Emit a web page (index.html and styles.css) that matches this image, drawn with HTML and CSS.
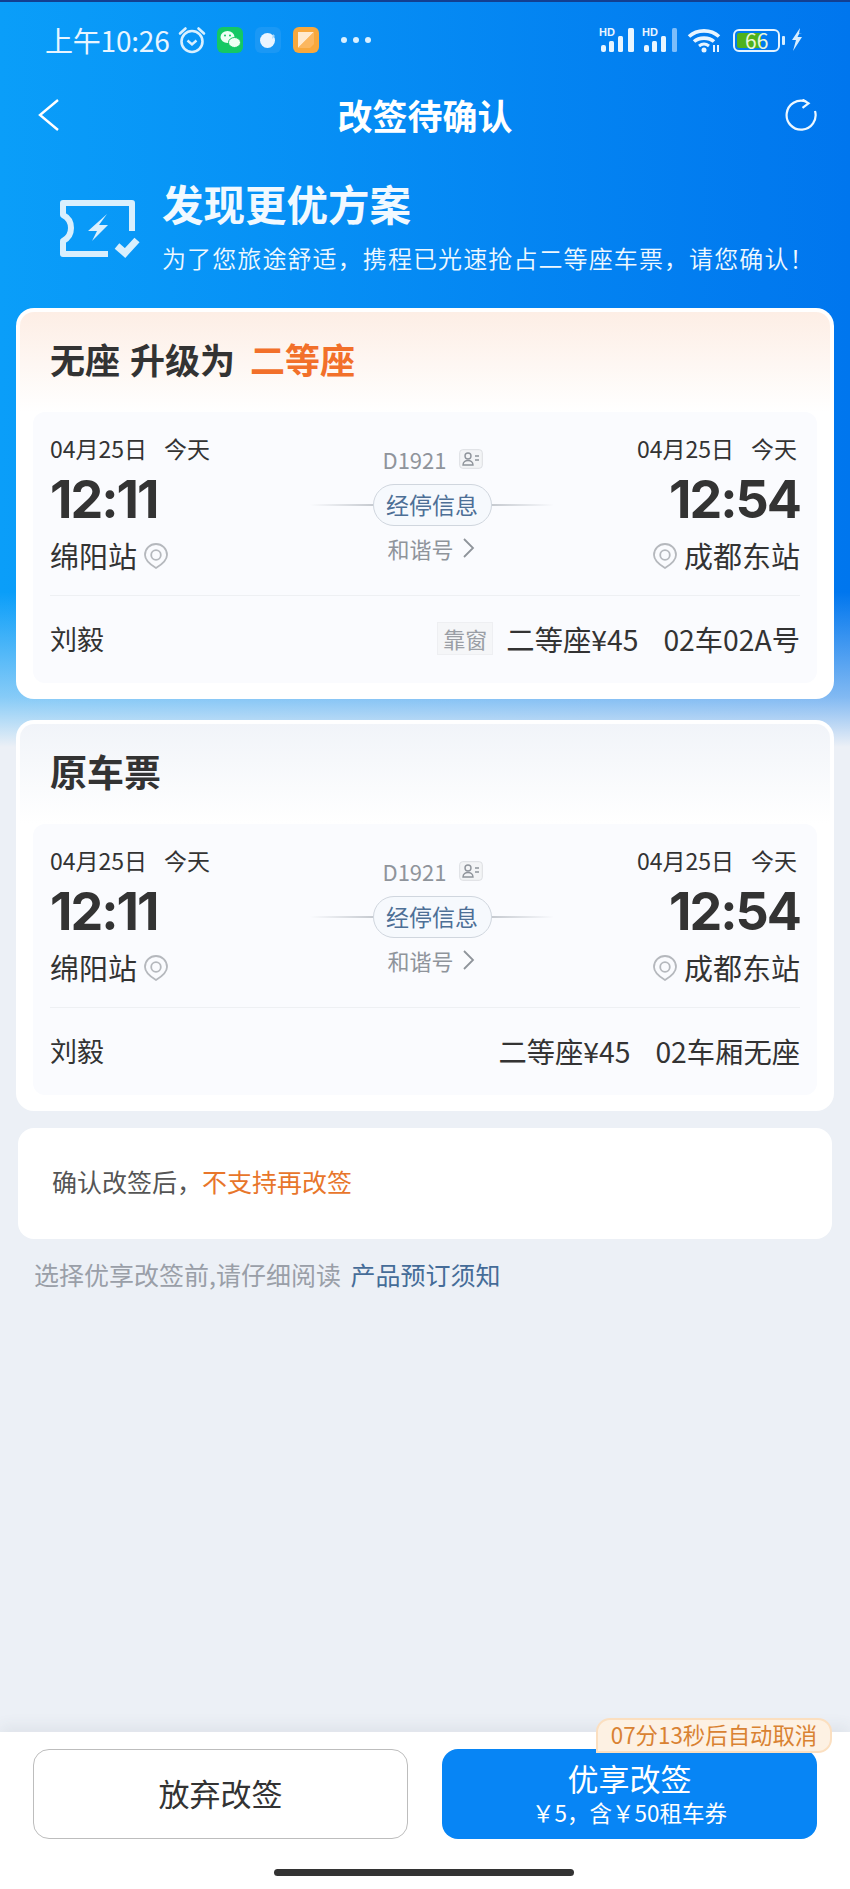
FILE: index.html
```html
<!DOCTYPE html>
<html lang="zh-CN">
<head>
<meta charset="utf-8">
<title>改签待确认</title>
<link rel="stylesheet" href="styles.css">
</head>
<body>
<div class="page">
  <main class="main">
    <div class="status">
      <div class="status-left">
        <span class="clock">上午10:26</span>
        <svg class="ic-alarm" viewBox="0 0 30 30"><circle cx="15" cy="16.500" r="10.500" fill="none" stroke="#d9f0ff" stroke-width="2.600"/><path d="M10.500 15.500l4.500 4 4.500-4" fill="none" stroke="#d9f0ff" stroke-width="2.400"/><path d="M3 8.500L8.500 3.500M27 8.500L21.500 3.500" stroke="#d9f0ff" stroke-width="2.600" stroke-linecap="round"/></svg>
        <svg class="ic-app ic-wx" viewBox="0 0 26 26"><rect width="26" height="26" rx="6" fill="#14c864"/><ellipse cx="10.500" cy="10" rx="7" ry="6" fill="#eefff4"/><ellipse cx="17.500" cy="15.500" rx="6" ry="5" fill="#eefff4" stroke="#14c864"/><circle cx="8" cy="8.500" r="1" fill="#14c864"/><circle cx="13" cy="8.500" r="1" fill="#14c864"/></svg>
        <svg class="ic-app" viewBox="0 0 26 26"><rect width="26" height="26" rx="6" fill="#1a98f5"/><circle cx="12.500" cy="13.500" r="7.500" fill="#eaf5ff"/><path d="M18 7l2 2-3 3z" fill="#9fd4fb"/></svg>
        <svg class="ic-app" viewBox="0 0 26 26"><rect width="26" height="26" rx="6" fill="#f8a83c"/><path d="M5 5h16L5 21z" fill="#ffeacf"/><path d="M21 5v12l-4 4H5z" fill="#fbb75f"/></svg>
        <span class="dots"><i></i><i></i><i></i></span>
      </div>
      <div class="status-right">
        <div class="sig"><span class="hd">HD</span><svg class="ic-sig" viewBox="0 0 36 24"><rect x="2" y="17" width="5" height="7" rx="2" fill="#e8f5ff"/><rect x="10" y="13" width="5" height="11" rx="1.500" fill="#e8f5ff"/><rect x="19" y="8" width="5" height="16" rx="1.500" fill="#e8f5ff"/><rect x="29" y="0" width="6" height="24" rx="1.500" fill="#e8f5ff"/></svg></div>
        <div class="sig"><span class="hd">HD</span><svg class="ic-sig" viewBox="0 0 36 24"><rect x="2" y="17" width="5" height="7" rx="2" fill="#e8f5ff"/><rect x="10" y="13" width="5" height="11" rx="1.500" fill="#e8f5ff"/><rect x="19" y="8" width="5" height="16" rx="1.500" fill="#e8f5ff"/><rect x="30" y="0" width="5" height="24" rx="1.500" fill="#7dbdfa"/></svg></div>
        <svg class="ic-wifi" viewBox="0 0 34 26"><path d="M2 9.500C10 2 24 2 32 9.500" fill="none" stroke="#e8f5ff" stroke-width="3.600"/><path d="M7 14.500C12 10 22 10 27 14.500" fill="none" stroke="#e8f5ff" stroke-width="3.600"/><path d="M12 19c3-2.400 7-2.400 10 0" fill="none" stroke="#e8f5ff" stroke-width="3"/><circle cx="17" cy="23" r="2.500" fill="#e8f5ff"/><path d="M27 18v7M31 18v7" stroke="#e8f5ff" stroke-width="2"/></svg>
        <div class="battery"><span class="battery-fill"></span><span class="battery-num">66</span></div>
        <span class="battery-cap"></span>
        <svg class="ic-bolt" viewBox="0 0 12 24"><path d="M9 0L1 12h4l-3 11 9-14H6.500l1.500-3 3-1-3 .5z" fill="#d6edff"/></svg>
      </div>
    </div>

    <header class="nav">
      <svg class="ic-back" viewBox="0 0 24 36"><path d="M22 3L4 18l18 15" fill="none" stroke="#fff" stroke-width="2.400"/></svg>
      <h1 class="nav-title">改签待确认</h1>
      <svg class="ic-refresh" viewBox="0 0 32 32"><path d="M21 2.500A14.500 14.500 0 1 0 30 12" fill="none" stroke="#eef8ff" stroke-width="2.200"/><path d="M17.500 .5l6 3.800-6 4.500" fill="none" stroke="#eef8ff" stroke-width="2.200"/></svg>
    </header>

    <section class="hero">
      <svg class="ic-ticket" viewBox="0 0 80 58"><path d="M72 31V3H3V15Q11 19 11 28T3 41V54H48" fill="none" stroke="#d9effd" stroke-width="6" stroke-linejoin="round"/><path d="M47 14L28 31h9l-5 10 16-16h-9z" fill="#d9effd"/><path d="M57 46l8 7 12-13" fill="none" stroke="#d9effd" stroke-width="7"/></svg>
      <div class="hero-text">
        <h2 class="hero-title">发现更优方案</h2>
        <p class="hero-sub">为了您旅途舒适，携程已光速抢占二等座车票，请您确认！</p>
      </div>
    </section>

    <section class="card">
      <div class="card-head head-peach">
        <h3 class="card-title">无座 升级为 <em class="accent">二等座</em></h3>
      </div>
      <div class="panel">
        <div class="route">
          <div class="stop">
            <div class="date"><span>04月25日</span><span>今天</span></div>
            <div class="time">12:11</div>
            <div class="station"><span>绵阳站</span><svg class="ic-pin" viewBox="0 0 24 26"><path d="M12 1a11 11 0 0 1 11 11c0 6-6 10-11 13C7 22 1 18 1 12A11 11 0 0 1 12 1z" fill="none" stroke="#b5b8bd" stroke-width="1.800"/><circle cx="12" cy="12" r="4.800" fill="none" stroke="#b5b8bd" stroke-width="1.800"/></svg></div>
          </div>
          <div class="mid">
            <div class="train"><span>D1921</span><svg class="ic-id" viewBox="0 0 24 20"><rect x=".7" y=".7" width="22.600" height="18.600" rx="3" fill="#f3f4f6" stroke="#dcdee2"/><circle cx="9" cy="7" r="3" fill="none" stroke="#8f949b" stroke-width="1.400"/><path d="M4 16c0-6 10-6 10 0z" fill="none" stroke="#8f949b" stroke-width="1.400"/><path d="M16 7h4M16 11h4" stroke="#8f949b" stroke-width="1.400"/></svg></div>
            <div class="pill-row"><span class="line line-l"></span><span class="pill">经停信息</span><span class="line line-r"></span></div>
            <div class="model"><span>和谐号</span><svg class="ic-chev" viewBox="0 0 13 22"><path d="M2 2l9 9-9 9" fill="none" stroke="#8f949b" stroke-width="1.800"/></svg></div>
          </div>
          <div class="stop stop-r">
            <div class="date"><span>04月25日</span><span>今天</span></div>
            <div class="time">12:54</div>
            <div class="station"><svg class="ic-pin" viewBox="0 0 24 26"><path d="M12 1a11 11 0 0 1 11 11c0 6-6 10-11 13C7 22 1 18 1 12A11 11 0 0 1 12 1z" fill="none" stroke="#b5b8bd" stroke-width="1.800"/><circle cx="12" cy="12" r="4.800" fill="none" stroke="#b5b8bd" stroke-width="1.800"/></svg><span>成都东站</span></div>
          </div>
        </div>
        <div class="passenger">
          <span class="name">刘毅</span>
          <div class="seat"><span class="tag">靠窗</span><span>二等座¥45</span><span>02车02A号</span></div>
        </div>
      </div>
    </section>

    <section class="card">
      <div class="card-head head-blue">
        <h3 class="card-title card-title-lg">原车票</h3>
      </div>
      <div class="panel">
        <div class="route">
          <div class="stop">
            <div class="date"><span>04月25日</span><span>今天</span></div>
            <div class="time">12:11</div>
            <div class="station"><span>绵阳站</span><svg class="ic-pin" viewBox="0 0 24 26"><path d="M12 1a11 11 0 0 1 11 11c0 6-6 10-11 13C7 22 1 18 1 12A11 11 0 0 1 12 1z" fill="none" stroke="#b5b8bd" stroke-width="1.800"/><circle cx="12" cy="12" r="4.800" fill="none" stroke="#b5b8bd" stroke-width="1.800"/></svg></div>
          </div>
          <div class="mid">
            <div class="train"><span>D1921</span><svg class="ic-id" viewBox="0 0 24 20"><rect x=".7" y=".7" width="22.600" height="18.600" rx="3" fill="#f3f4f6" stroke="#dcdee2"/><circle cx="9" cy="7" r="3" fill="none" stroke="#8f949b" stroke-width="1.400"/><path d="M4 16c0-6 10-6 10 0z" fill="none" stroke="#8f949b" stroke-width="1.400"/><path d="M16 7h4M16 11h4" stroke="#8f949b" stroke-width="1.400"/></svg></div>
            <div class="pill-row"><span class="line line-l"></span><span class="pill">经停信息</span><span class="line line-r"></span></div>
            <div class="model"><span>和谐号</span><svg class="ic-chev" viewBox="0 0 13 22"><path d="M2 2l9 9-9 9" fill="none" stroke="#8f949b" stroke-width="1.800"/></svg></div>
          </div>
          <div class="stop stop-r">
            <div class="date"><span>04月25日</span><span>今天</span></div>
            <div class="time">12:54</div>
            <div class="station"><svg class="ic-pin" viewBox="0 0 24 26"><path d="M12 1a11 11 0 0 1 11 11c0 6-6 10-11 13C7 22 1 18 1 12A11 11 0 0 1 12 1z" fill="none" stroke="#b5b8bd" stroke-width="1.800"/><circle cx="12" cy="12" r="4.800" fill="none" stroke="#b5b8bd" stroke-width="1.800"/></svg><span>成都东站</span></div>
          </div>
        </div>
        <div class="passenger">
          <span class="name">刘毅</span>
          <div class="seat"><span>二等座¥45</span><span>02车厢无座</span></div>
        </div>
      </div>
    </section>

    <section class="notice">确认改签后，<span class="notice-hi">不支持再改签</span></section>
    <p class="tip">选择优享改签前,请仔细阅读 <span class="tip-link">产品预订须知</span></p>
  </main>

  <footer class="footer">
    <div class="actions">
      <button class="btn btn-ghost">放弃改签</button>
      <button class="btn btn-main"><span class="btn-main-t">优享改签</span><span class="btn-main-s">&#xFFE5;5，含&#xFFE5;50租车券</span></button>
    </div>
    <span class="countdown">07分13秒后自动取消</span>
    <div class="home-bar"></div>
  </footer>
</div>
</body>
</html>
```
FILE: styles.css
```css
* { box-sizing: border-box; }
html, body { margin: 0; padding: 0; }
body { width: 850px; font-family: "Noto Sans CJK SC", "Noto Sans", sans-serif; color: #333; }
h1, h2, h3, p { margin: 0; }
em { font-style: normal; }
svg { display: block; flex: none; }

.page {
  width: 850px;
  height: 1889px;
  display: flex;
  flex-direction: column;
  border-top: 2px solid #123f91;
  background:
    linear-gradient(to bottom, rgba(236,240,246,0) 590px, rgba(236,240,246,.55) 695px, #ecf0f6 745px),
    linear-gradient(to right, #0a9ef9, #0076ee);
}
.main { flex: 1; min-height: 0; }

.status { height: 76px; display: flex; justify-content: space-between; align-items: center; padding: 0 47px 0 45px; color: #e8f5ff; }
.status-left, .status-right { display: flex; align-items: center; }
.clock { font-size: 28px; letter-spacing: -.2px; }
.ic-alarm { width: 30px; height: 30px; margin-left: 7px; }
.ic-app { width: 26px; height: 26px; margin-left: 12px; }
.ic-wx { margin-left: 10px; }
.dots { display: flex; gap: 6px; margin-left: 22px; }
.dots i { width: 6px; height: 6px; border-radius: 50%; background: #d9f0ff; }
.sig { position: relative; width: 36px; height: 24px; margin-right: 7px; }
.ic-sig { width: 36px; height: 24px; }
.hd { position: absolute; left: 0; top: -1px; font: 700 11px/11px "Liberation Sans", sans-serif; color: #e8f5ff; }
.ic-wifi { width: 34px; height: 26px; margin: 0 12px 0 2px; }
.battery { width: 47px; height: 23px; border: 2px solid #e4f3ff; border-radius: 6px; position: relative; }
.battery-fill { position: absolute; left: 2px; top: 2px; bottom: 2px; width: 24px; background: #4fb21c; border-radius: 2px; }
.battery-num { position: absolute; left: 10px; top: 0; font-size: 21px; line-height: 19px; color: #e9f7d9; }
.battery-cap { width: 3px; height: 9px; margin-left: 2px; background: #d6edff; border-radius: 1px; }
.ic-bolt { width: 12px; height: 24px; margin-left: 6px; }

.nav { height: 76px; display: flex; align-items: center; justify-content: space-between; padding: 0 33px 2px 36px; position: relative; }
.ic-back { width: 24px; height: 36px; margin-right: 5px; }
.nav-title { font-size: 35px; line-height: 48px; font-weight: 700; color: #fff; }
.ic-refresh { width: 32px; height: 32px; }

.hero { height: 154px; display: flex; padding: 21px 0 0 60px; color: #eef8ff; }
.ic-ticket { width: 80px; height: 58px; margin-top: 25px; }
.hero-text { margin-left: 22px; }
.hero-title { font-size: 41.5px; line-height: 56px; font-weight: 700; color: #f1f9ff; }
.hero-sub { font-size: 24px; line-height: 34px; margin-top: 10px; letter-spacing: 1.1px; white-space: nowrap; font-weight: 350; }

.card { margin: 0 16px 21px; height: 391px; background: #fff; border-radius: 18px; padding: 4px; display: flex; flex-direction: column; }
.card-head { height: 100px; flex: none; padding: 0 0 6px 30px; border-radius: 14px 14px 0 0; display: flex; align-items: center; }
.head-peach { background: linear-gradient(to bottom, #fdeee5, #fff); }
.head-blue { background: linear-gradient(to bottom, #f1f4f9, #fff); }
.card-title { font-size: 35px; line-height: 48px; font-weight: 700; color: #333; word-spacing: 2px; }
.card-title-lg { font-size: 37px; }
.accent { color: #f2702a; margin-left: 5px; }

.panel { margin: 0 13px; height: 271px; background: #fafbfe; border-radius: 12px; padding: 0 17px; display: flex; flex-direction: column; }
.route { height: 184px; flex: none; display: grid; grid-template-columns: 262px 240px 248px; border-bottom: 1px solid #eef0f3; }
.stop { padding-top: 21px; }
.stop-r { text-align: right; }
.date { display: flex; gap: 17px; font-size: 23px; line-height: 30px; color: #333; }
.stop-r .date { justify-content: flex-end; padding-right: 3px; }
.time { font-family: "Inter", sans-serif; font-size: 52px; letter-spacing: -2px; line-height: 60px; font-weight: 700; color: #333; margin-top: 7px; }
.station { display: flex; align-items: center; gap: 7px; font-size: 29px; line-height: 40px; color: #333; margin-top: 5px; }
.stop-r .station { justify-content: flex-end; }
.ic-pin { width: 24px; height: 26px; margin-top: 2px; }

.mid { display: flex; flex-direction: column; align-items: center; padding-top: 31px; color: #8f949b; }
.train { display: flex; align-items: center; gap: 13px; font-size: 22px; line-height: 32px; margin-left: 2px; }
.ic-id { width: 24px; height: 20px; }
.pill-row { display: flex; align-items: center; width: 244px; margin-top: 9px; flex: none; }
.line { flex: 1; height: 2px; }
.line-l { background: linear-gradient(to right, rgba(190,195,202,0), #c6cad0); }
.line-r { background: linear-gradient(to right, #c6cad0, rgba(190,195,202,0)); }
.pill { width: 119px; height: 42px; border: 1px solid #d0d6de; border-radius: 21px; background: #f6f9fd; font-size: 23px; line-height: 39px; text-align: center; color: #4d6f96; }
.model { display: flex; align-items: center; gap: 8px; font-size: 22px; line-height: 32px; margin: 6px 0 0 -2px; }
.ic-chev { width: 13px; height: 22px; }

.passenger { flex: 1; display: flex; align-items: center; justify-content: space-between; font-size: 28.3px; color: #333; padding-bottom: 2px; }
.name { font-size: 27px; }
.seat { display: flex; align-items: center; gap: 25px; }
.tag { width: 56px; height: 33px; margin-right: -12px; font-size: 22px; line-height: 31px; text-align: center; color: #9a9ea5; background: #f5f6f8; border: 1px solid #eeeff2; }

.notice { margin: -4px 18px 0; height: 111px; background: #fff; border-radius: 16px; padding-left: 34px; font-size: 25px; line-height: 107px; color: #555; }
.notice-hi { color: #e8762b; }
.tip { font-size: 25px; line-height: 36px; color: #9a9fa8; padding: 17px 0 0 34px; }
.tip-link { color: #456c98; margin-left: 4px; }

.footer { position: relative; height: 157px; flex: none; background: #fff; padding-top: 17px; box-shadow: 0 -6px 14px rgba(60,70,85,.07); }
.actions { display: flex; justify-content: space-between; padding: 0 33px; }
.btn { width: 375px; height: 90px; border-radius: 16px; font-family: inherit; padding: 0; }
.btn-ghost { background: #fff; border: 1px solid #bdbdbd; font-size: 31px; color: #333; padding-bottom: 4px; }
.btn-main { background: #0785f5; border: 0; color: #fff; display: flex; flex-direction: column; align-items: center; justify-content: center; padding-bottom: 3px; }
.btn-main-t { font-size: 31px; line-height: 40px; }
.btn-main-s { font-size: 22.500px; line-height: 30px; margin-top: -1px; white-space: nowrap; }
.countdown { position: absolute; right: 18px; top: -14px; height: 35px; width: 236px; background: #fdf1e3; border: 2px solid #fbdfc0; border-radius: 14px 14px 14px 0; text-align: center; font-size: 22.400px; line-height: 29px; color: #d98232; white-space: nowrap; }
.home-bar { position: absolute; left: 274px; bottom: 13px; width: 300px; height: 7px; border-radius: 4px; background: #333; }
```
